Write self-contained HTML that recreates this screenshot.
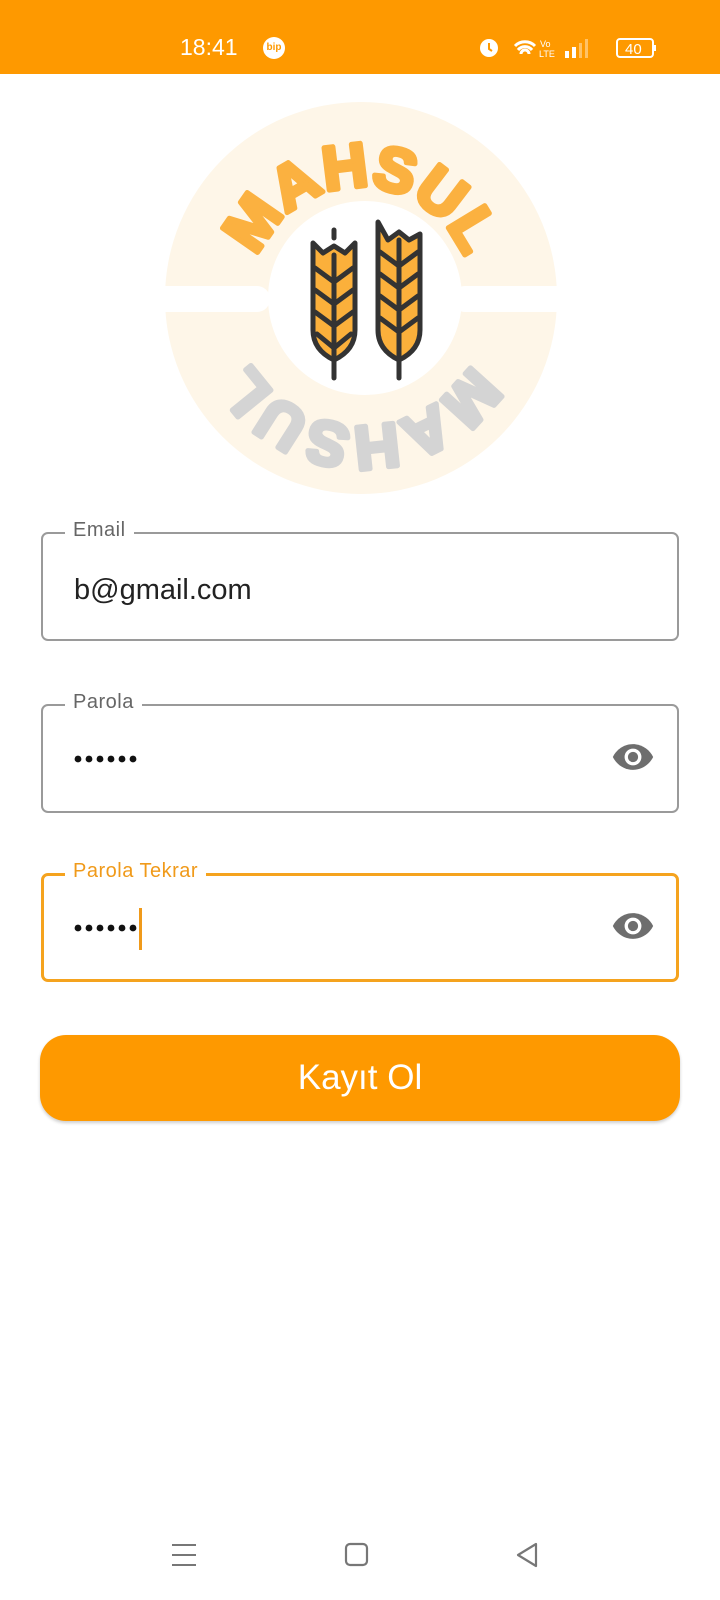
<!DOCTYPE html>
<html><head><meta charset="utf-8"><style>
*{margin:0;padding:0;box-sizing:border-box}
body{width:720px;height:1600px;background:#fff;position:relative;overflow:hidden;font-family:"Liberation Sans",sans-serif}
.sb{position:absolute;left:0;top:0;width:720px;height:74px;background:#fe9900}
.abs{position:absolute}
.box{position:absolute;left:41px;width:638px;height:109px;border:2px solid #9a9a9a;border-radius:7px}
.lbl{position:absolute;left:22px;top:-15px;background:#fff;padding:0 8px;font-size:20px;color:#666;letter-spacing:.5px}
.val{position:absolute;left:31px;font-size:29px;color:#222}
.dots{position:absolute;left:31px;top:48px}
.eye{position:absolute;right:22px;top:36px}
</style></head><body>
<div class="sb">
 <div class="abs" style="left:180px;top:34px;font-size:23px;color:#fff">18:41</div>
 <div class="abs" style="left:263px;top:37px;width:22px;height:22px;border-radius:50%;background:#fff;color:#fe9900;font-size:10px;font-weight:bold;text-align:center;line-height:22px">bip</div>
 <svg class="abs" style="left:475px;top:34px" width="200" height="30">
  <circle cx="14" cy="14" r="9" fill="#fff"/><path d="M14 9v6l3 2" stroke="#fe9900" stroke-width="2" fill="none"/>
  <path d="M40 12a14 14 0 0 1 20 0M43 16a9 9 0 0 1 14 0M46 20a4 4 0 0 1 8 0" stroke="#fff" stroke-width="3" fill="none"/>
  <text x="65" y="13" font-size="9" fill="#fff" font-family="Liberation Sans">Vo</text><text x="64" y="23" font-size="9" fill="#fff" font-family="Liberation Sans">LTE</text>
  <rect x="90" y="17" width="4" height="7" fill="#fff"/><rect x="97" y="13" width="4" height="11" fill="#fff"/><rect x="104" y="9" width="3" height="15" fill="#ffc266"/><rect x="110" y="5" width="3" height="19" fill="#ffc266"/>
  <rect x="142" y="5" width="36" height="18" rx="3" fill="none" stroke="#fff" stroke-width="2"/><rect x="179" y="11" width="2" height="6" fill="#fff"/>
  <text x="150" y="20" font-size="15" fill="#fff" font-family="Liberation Sans">40</text>
 </svg>
</div>

<svg class="abs" style="left:0;top:74px" width="720" height="420" viewBox="0 74 720 420">
 <circle cx="361" cy="298" r="196" fill="#fef6e8"/>
 <rect x="150" y="286" width="120" height="26" rx="13" fill="#fff"/>
 <rect x="452" y="286" width="120" height="26" rx="13" fill="#fff"/>
 <circle cx="365" cy="298" r="97" fill="#fff"/>
 <defs>
  <path id="arcT" d="M250 298 A111 111 0 0 1 472 298"/>
  <path id="arcB" d="M233 298 A128 128 0 0 1 489 298"/>
 </defs>
 <text font-family="Liberation Sans" font-weight="bold" font-size="62" fill="#fbb140" stroke="#fbb140" stroke-width="5" stroke-linejoin="round" text-anchor="middle"><textPath href="#arcT" startOffset="50%">MAHSUL</textPath></text>
 <g transform="rotate(180 361 298)">
  <text font-family="Liberation Sans" font-weight="bold" font-size="62" fill="#d4d4d4" stroke="#d4d4d4" stroke-width="5" stroke-linejoin="round" text-anchor="middle"><textPath href="#arcB" startOffset="50%">MAHSUL</textPath></text>
 </g>
 <g stroke="#333" stroke-width="5" stroke-linejoin="round" stroke-linecap="round">
  <path d="M313 243 L313 330 Q313 350 334 360 Q355 350 355 330 L355 243 L345 253 L334 246 L323 253 Z" fill="#fbb03b"/>
  <path d="M334 255 V378" fill="none"/>
  <path d="M315 268 L334 282 L353 268 M315 290 L334 304 L353 290 M315 312 L334 326 L353 312 M317 334 L334 348 L351 334" fill="none"/>
  <path d="M334 230 V238" fill="none"/>
 </g>
 <g stroke="#333" stroke-width="5" stroke-linejoin="round" stroke-linecap="round">
  <path d="M378 222 L378 330 Q378 350 399 360 Q420 350 420 330 L420 234 L409 240 L399 232 L388 240 Z" fill="#fbb03b"/>
  <path d="M399 240 V378" fill="none"/>
  <path d="M380 252 L399 266 L418 252 M380 274 L399 288 L418 274 M380 296 L399 310 L418 296 M380 318 L399 332 L418 318" fill="none"/>
 </g>
</svg>

<div class="box" style="top:532px">
 <div class="lbl">Email</div>
 <div class="val" style="top:40px">b@gmail.com</div>
</div>
<div class="box" style="top:704px">
 <div class="lbl">Parola</div>
 <svg class="dots" width="70" height="10"><g fill="#111"><circle cx="4" cy="5" r="3.4"/><circle cx="15" cy="5" r="3.4"/><circle cx="26" cy="5" r="3.4"/><circle cx="37" cy="5" r="3.4"/><circle cx="48" cy="5" r="3.4"/><circle cx="59" cy="5" r="3.4"/></g></svg>
 <svg class="eye" width="44" height="30" viewBox="0 0 24 16"><path d="M12 1C7 1 3 4 1 8c2 4 6 7 11 7s9-3 11-7c-2-4-6-7-11-7z" fill="#6e6e6e"/><circle cx="12" cy="8" r="4.6" fill="#fff"/><circle cx="12" cy="8" r="2.8" fill="#6e6e6e"/></svg>
</div>
<div class="box" style="top:873px;border:3px solid #f5a31e">
 <div class="lbl" style="color:#f09a1a;left:21px;top:-16px">Parola Tekrar</div>
 <svg class="dots" width="70" height="10" style="left:30px;top:47px"><g fill="#111"><circle cx="4" cy="5" r="3.4"/><circle cx="15" cy="5" r="3.4"/><circle cx="26" cy="5" r="3.4"/><circle cx="37" cy="5" r="3.4"/><circle cx="48" cy="5" r="3.4"/><circle cx="59" cy="5" r="3.4"/></g></svg>
 <div class="abs" style="left:95px;top:32px;width:3px;height:42px;background:#f09a1a"></div>
 <svg class="eye" width="44" height="30" viewBox="0 0 24 16" style="right:21px;top:35px"><path d="M12 1C7 1 3 4 1 8c2 4 6 7 11 7s9-3 11-7c-2-4-6-7-11-7z" fill="#6e6e6e"/><circle cx="12" cy="8" r="4.6" fill="#fff"/><circle cx="12" cy="8" r="2.8" fill="#6e6e6e"/></svg>
</div>
<div class="abs" style="left:40px;top:1035px;width:640px;height:86px;border-radius:26px;background:#fe9900;box-shadow:0 2px 3px rgba(0,0,0,.2);color:#fff;font-size:35px;text-align:center;line-height:86px">Kayıt Ol</div>

<svg class="abs" style="left:0;top:1535px" width="720" height="40">
 <path d="M172 10h24M172 20h24M172 30h24" stroke="#777" stroke-width="2"/>
 <rect x="346" y="9" width="21" height="21" rx="4" fill="none" stroke="#777" stroke-width="2.2"/>
 <path d="M536 9 L518 20 L536 31 Z" fill="none" stroke="#777" stroke-width="2.2" stroke-linejoin="round"/>
</svg>
</body></html>
